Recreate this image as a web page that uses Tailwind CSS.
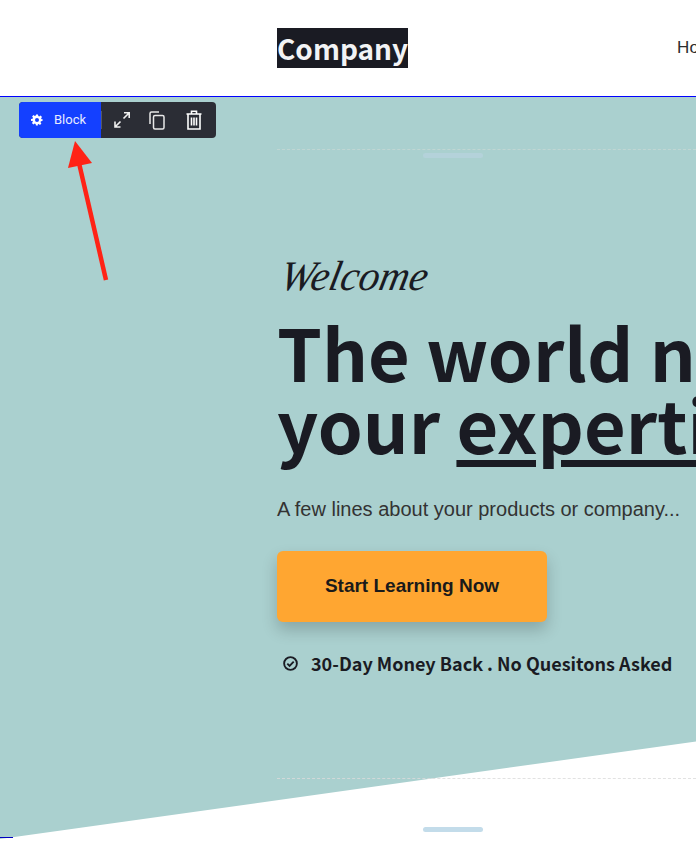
<!DOCTYPE html>
<html lang="en">

<head>
    <meta charset="UTF-8">
    <meta name="viewport" content="width=device-width, initial-scale=1.0">
    <script src="https://cdn.jsdelivr.net/npm/@tailwindcss/browser@4"></script>
    <title>Company</title>
</head>

<body class="bg-white font-['Liberation_Sans',sans-serif]">
    <div class="relative w-[696px] h-[845px] overflow-hidden">

        <!-- Header -->
        <header class="h-24 flex items-center pl-[277px] whitespace-nowrap">
            <a href="#" class="bg-[#1a1b23] text-[#f2f3f5] h-10 w-[143px] flex items-center justify-center text-[28px] font-bold font-['Noto_Sans_CJK_SC',sans-serif]">Company</a>
            <nav class="ml-[268px] text-[17px] text-[#2d2d2d] translate-x-px">Home</nav>
        </header>
        <div class="h-px bg-[#0000ff]"></div>

        <!-- Hero -->
        <section class="h-[742px] bg-[#aad0cf] [clip-path:polygon(0_0,100%_0,100%_644.5px,0_742px)] pl-[277px] pt-[52px] whitespace-nowrap">
            <div class="border-t border-dashed border-[#c0d6d3] pt-[100px] h-[629px] w-[419px]">
                <p class="h-[62px] pt-[6px] text-[42px] leading-[40px] italic text-[#1a1b23] font-['Liberation_Serif',serif]"><span class="inline-block origin-bottom-left -skew-x-12 scale-x-[0.98]">Welcome</span></p>
                <h1 class="mt-[3px] text-[72px] leading-[72px] font-bold text-[#1a1b23] font-['Noto_Sans_CJK_SC',sans-serif]">
                    The world needs<br>your <span class="underline decoration-[7px] underline-offset-[6px]">expertise</span>
                </h1>
                <p class="mt-[36px] text-xl leading-7 text-[#333333]">A few lines about your products or company...</p>
                <a href="#" class="mt-[28px] w-[270px] h-[71px] flex items-center justify-center rounded-md bg-[#ffa631] text-[#1a1a1a] text-[19px] font-bold shadow-[0_8px_16px_rgba(0,0,0,0.2)]">Start Learning Now</a>
                <div class="mt-[27px] ml-[6px] flex items-center gap-[13px] text-[#1a1b23] text-[18px] leading-7 font-bold font-['Noto_Sans_CJK_SC',sans-serif]">
                    <svg class="w-[15px] h-[15px] shrink-0" viewBox="0 0 16 16" fill="none" stroke="#1a1b23" stroke-width="2">
                        <circle cx="8" cy="8" r="6.8"/>
                        <path d="M4.6 8.2l2.4 2.4 4.4-4.6"/>
                    </svg>
                    <span>30-Day Money Back . No Quesitons Asked</span>
                </div>
            </div>
        </section>

        <!-- Lower block -->
        <div class="absolute left-[277px] right-0 top-[778px] border-t border-dashed border-[#dcdcdc] opacity-80"></div>
        <div class="absolute left-[423px] top-[153px] w-[60px] h-[5px] rounded-full bg-[#b8d3de]/70"></div>
        <div class="absolute left-[423px] top-[827px] w-[45px] h-[5px] rounded-full bg-[#c3dcea] w-[60px]"></div>
        <div class="absolute left-0 top-[837px] w-[13px] h-px bg-[#0000c0]"></div>

        <!-- Block toolbar -->
        <div class="absolute left-[19px] top-[102px] w-[197px] h-9 flex rounded bg-[#2b2d35] overflow-hidden font-['Roboto',sans-serif]">
            <div class="w-[82px] flex items-center pl-3 gap-[11px] bg-[#1440ff] text-[#e8ecff] text-[13px]">
                <svg class="w-3 h-3" viewBox="0 0 24 24" fill="#fff">
                    <path fill-rule="evenodd" d="M10 1h4l.6 3.2 1.9.8 2.7-1.8 2.8 2.8-1.8 2.7.8 1.9L23 10v4l-3.2.6-.8 1.9 1.8 2.7-2.8 2.8-2.7-1.8-1.9.8L13.9 23h-4l-.6-3.2-1.9-.8-2.7 1.8-2.8-2.8 1.8-2.7-.8-1.9L0 14v-4l3.2-.6.8-1.9-1.8-2.7 2.8-2.8 2.7 1.8 1.9-.8zM12 8a4 4 0 100 8 4 4 0 000-8z"/>
                </svg>
                <span>Block</span>
            </div>
            <div class="flex items-center text-white">
                <div class="w-px h-[18px] bg-[#555862]"></div>
                <svg class="ml-[11px] w-[18px] h-[18px]" viewBox="0 0 18 18" fill="none" stroke="#f0f0f0" stroke-width="1.6">
                    <path d="M10.5 7.5L15.5 2.5M11 1.8h5.2V7M7.5 10.5l-5 5M2 10.5v5.5h5.5"/>
                </svg>
                <svg class="ml-[18px] w-4 h-[19px]" viewBox="0 0 16 19" fill="none" stroke="#e8e8e8" stroke-width="1.5">
                    <rect x="4.5" y="4.5" width="10.5" height="13.5" rx="1.5"/>
                    <path d="M1 13V2.5A1.5 1.5 0 012.5 1H10"/>
                </svg>
                <svg class="ml-[21px] w-[16px] h-[20px]" viewBox="0 0 16 20" fill="none" stroke="#fff" stroke-width="1.6">
                    <path d="M0.5 4h15M5.5 4V1.2h5V4M2 4v15h12V4M5.5 7.5v8M8 7.5v8M10.5 7.5v8"/>
                </svg>
            </div>
        </div>

        <!-- Red arrow annotation -->
        <svg class="absolute left-[60px] top-[135px]" width="50" height="150" viewBox="0 0 50 150" fill="#ff2316">
            <path d="M15 6L8 33 32 28z"/>
            <path d="M19 28l27 117" fill="none" stroke="#ff2316" stroke-width="4.5"/>
        </svg>
    </div>
</body>

</html>
